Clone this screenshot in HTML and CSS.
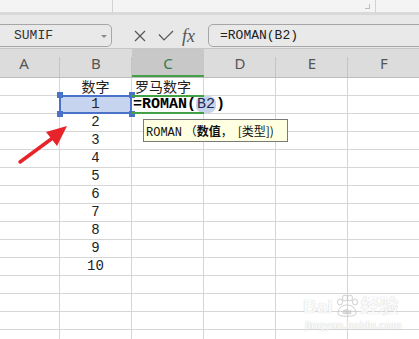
FILE: index.html
```html
<!DOCTYPE html>
<html lang="zh-CN">
<head>
  <meta charset="UTF-8">
  <meta name="viewport" content="width=device-width, initial-scale=1.0">
  <title>ROMAN 函数</title>
  <link rel="stylesheet" href="styles.css">
</head>
<body>
  <div class="app">
    <div class="ribbon">
      <div class="rb-seg rb-left"></div>
      <div class="rb-seg rb-mid"><span class="launcher"></span></div>
      <div class="rb-seg rb-right"></div>
    </div>

    <div class="fbar">
      <div class="namebox">
        <span class="name">SUMIF</span>
        <span class="drop"></span>
      </div>
      <div class="fbar-btns">
        <svg class="ico-x" width="14" height="12" viewBox="0 0 14 12">
          <path d="M2 1 L12 11 M12 1 L2 11" stroke="#555" stroke-width="1.2" fill="none"/>
        </svg>
        <svg class="ico-ok" width="16" height="11" viewBox="0 0 16 11">
          <path d="M1 4.5 L6 10 L15 1" stroke="#555" stroke-width="1.2" fill="none"/>
        </svg>
        <span class="fx">fx</span>
      </div>
      <div class="formula">=ROMAN(B2)</div>
    </div>

    <div class="sheet">
      <div class="heads">
        <div class="head">A</div>
        <div class="head">B</div>
        <div class="head active">C</div>
        <div class="head">D</div>
        <div class="head">E</div>
        <div class="head">F</div>
      </div>

      <div class="row">
        <div class="cell"></div>
        <div class="cell center">数字</div>
        <div class="cell">罗马数字</div>
        <div class="cell"></div><div class="cell"></div><div class="cell"></div>
      </div>
      <div class="row">
        <div class="cell"></div>
        <div class="cell num sel">1
          <span class="sel-frame"></span>
          <span class="handle tl"></span><span class="handle tr"></span>
          <span class="handle bl"></span><span class="handle br"></span>
        </div>
        <div class="cell edit">
          <span class="edit-frame"></span>=ROMAN(<span class="ref">B2</span>)
          <div class="tip"><span class="mono">ROMAN</span> （<b>数值</b>，<span class="gap"></span>[类型])</div>
        </div>
        <div class="cell"></div><div class="cell"></div><div class="cell"></div>
      </div>
      <div class="row"><div class="cell"></div><div class="cell num">2</div><div class="cell"></div><div class="cell"></div><div class="cell"></div><div class="cell"></div></div>
      <div class="row"><div class="cell"></div><div class="cell num">3</div><div class="cell"></div><div class="cell"></div><div class="cell"></div><div class="cell"></div></div>
      <div class="row"><div class="cell"></div><div class="cell num">4</div><div class="cell"></div><div class="cell"></div><div class="cell"></div><div class="cell"></div></div>
      <div class="row"><div class="cell"></div><div class="cell num">5</div><div class="cell"></div><div class="cell"></div><div class="cell"></div><div class="cell"></div></div>
      <div class="row"><div class="cell"></div><div class="cell num">6</div><div class="cell"></div><div class="cell"></div><div class="cell"></div><div class="cell"></div></div>
      <div class="row"><div class="cell"></div><div class="cell num">7</div><div class="cell"></div><div class="cell"></div><div class="cell"></div><div class="cell"></div></div>
      <div class="row"><div class="cell"></div><div class="cell num">8</div><div class="cell"></div><div class="cell"></div><div class="cell"></div><div class="cell"></div></div>
      <div class="row"><div class="cell"></div><div class="cell num">9</div><div class="cell"></div><div class="cell"></div><div class="cell"></div><div class="cell"></div></div>
      <div class="row"><div class="cell"></div><div class="cell num">10</div><div class="cell"></div><div class="cell"></div><div class="cell"></div><div class="cell"></div></div>
      <div class="row"><div class="cell"></div><div class="cell"></div><div class="cell"></div><div class="cell"></div><div class="cell"></div><div class="cell"></div></div>
      <div class="row"><div class="cell"></div><div class="cell"></div><div class="cell"></div><div class="cell"></div><div class="cell"></div><div class="cell"></div></div>
      <div class="row"><div class="cell"></div><div class="cell"></div><div class="cell"></div><div class="cell"></div><div class="cell"></div><div class="cell"></div></div>
      <div class="row"><div class="cell"></div><div class="cell"></div><div class="cell"></div><div class="cell"></div><div class="cell"></div><div class="cell"></div></div>
      <div class="row"><div class="cell"></div><div class="cell"></div><div class="cell"></div><div class="cell"></div><div class="cell"></div><div class="cell"></div></div>

      <!-- 红色箭头标注 -->
      <svg class="arrow" width="80" height="130" viewBox="0 0 80 130">
        <path d="M20 114 L54 89" stroke="#e8242a" stroke-width="3.5" stroke-linecap="round" fill="none"/>
        <path d="M67 78 L46 84 L57 98 Z" fill="#e8242a"/>
      </svg>

      <div class="watermark">
        <div class="wm-logo">
          <span>Bai</span>
          <svg width="26" height="24" viewBox="0 0 26 24">
            <g fill="none" stroke="#c8c8c8" stroke-width="1">
              <ellipse cx="6" cy="8" rx="2.5" ry="3"/>
              <ellipse cx="11" cy="4" rx="2.5" ry="3"/>
              <ellipse cx="16" cy="4" rx="2.5" ry="3"/>
              <ellipse cx="21" cy="8" rx="2.5" ry="3"/>
              <path d="M4 20 C4 13 9 11 13 11 C17 11 22 13 22 20 C22 23 4 23 4 20 Z"/>
            </g>
            <text x="13" y="20" font-size="7" text-anchor="middle" fill="#cccccc" font-family="Liberation Sans, sans-serif">du</text>
          </svg>
          <span>经验</span>
        </div>
        <div class="wm-url">jingyan.baidu.com</div>
      </div>
    </div>
  </div>
</body>
</html>
```

FILE: styles.css
```css
:root {
  --grid-line: #d6d6d6;
  --head-bg: #dcdcdc;
  --bar-bg: #e8e8e8;
  --select-blue: #4a72c8;
  --edit-green: #43a047;
  --cell-font: "Noto Sans CJK SC", sans-serif;
  --mono: "Liberation Mono", "Noto Sans CJK SC", monospace;
}

* {
  margin: 0;
  padding: 0;
  box-sizing: border-box;
}

body {
  width: 419px;
  height: 339px;
  overflow: hidden;
  background: #ffffff;
  font-family: var(--cell-font);
  color: #222;
}

.app {
  width: 419px;
  height: 339px;
  overflow: hidden;
}

/* 顶部功能区残留 */
.ribbon {
  display: flex;
  height: 15px;
  background: #f4f4f4;
  border-bottom: 3px solid #d9d9d9;
}

.rb-seg {
  height: 12px;
}

.rb-left {
  width: 113px;
  border-right: 1px solid #d2d2d2;
}

.rb-mid {
  width: 263px;
  border-right: 1px solid #d2d2d2;
  display: flex;
  justify-content: flex-end;
  padding: 4px 5px 0 0;
}

.launcher {
  width: 5px;
  height: 5px;
  border-right: 1px solid #bdbdbd;
  border-bottom: 1px solid #bdbdbd;
}

.rb-right {
  flex: 1;
}

/* 编辑栏 */
.fbar {
  display: flex;
  align-items: flex-end;
  height: 33px;
  padding-bottom: 1px;
  background: var(--bar-bg);
}

.namebox {
  display: flex;
  align-items: center;
  justify-content: space-between;
  width: 118px;
  height: 23px;
  margin-left: -6px;
  padding: 0 4px 0 19px;
  border: 1px solid #a6a6a6;
  border-radius: 5px;
  background: #e9e9e9;
}

.name {
  font-family: var(--mono);
  font-size: 13px;
  color: #333;
}

.drop {
  width: 0;
  height: 0;
  margin-top: 2px;
  border-left: 3px solid transparent;
  border-right: 3px solid transparent;
  border-top: 3px solid #8a8a8a;
}

.fbar-btns {
  display: flex;
  align-items: center;
  width: 96px;
  height: 23px;
  padding-left: 21px;
}

.ico-ok {
  margin-left: 11px;
}

.fx {
  margin-left: 8px;
  font-family: "Liberation Serif", serif;
  font-style: italic;
  font-size: 18px;
  line-height: 20px;
  color: #555;
}

.formula {
  flex: 1;
  height: 23px;
  margin-right: -10px;
  padding-left: 11px;
  border: 1px solid #a6a6a6;
  border-radius: 5px;
  background: #e9e9e9;
  font-family: var(--mono);
  font-size: 13px;
  line-height: 21px;
  color: #222;
}

/* 表格 */
.sheet {
  position: relative;
  height: 291px;
  overflow: hidden;
}

.heads,
.row {
  display: grid;
  grid-template-columns: repeat(6, 72px);
  margin-left: -12px;
}

.heads {
  height: 30px;
  background: var(--head-bg);
  border-top: 1px solid #c6c6c6;
  border-bottom: 1px solid #bdbdbd;
}

.head {
  text-align: center;
  font-family: "Noto Sans", sans-serif;
  font-size: 15px;
  line-height: 28px;
  color: #555;
  background: linear-gradient(#c4c4c4, #c4c4c4) right bottom / 1px 20px no-repeat;
}

.head.active {
  background: #c8c8c8;
  box-shadow: inset 0 -2px 0 var(--edit-green);
  color: #2f7d4a;
}

.row {
  height: 18px;
}

.cell {
  border-right: 1px solid var(--grid-line);
  border-bottom: 1px solid var(--grid-line);
  font-size: 14px;
  line-height: 17px;
  white-space: nowrap;
  padding-left: 3px;
}

.center {
  text-align: center;
  padding-left: 0;
}

.num {
  text-align: center;
  padding-left: 0;
  font-family: var(--mono);
  font-size: 14px;
}

/* 选中的 B2 */
.sel {
  position: relative;
  background: #c6d4f0;
}

.sel-frame {
  position: absolute;
  left: -1px;
  top: -1px;
  right: -1px;
  bottom: -1px;
  border: 2px solid var(--select-blue);
}

.handle {
  position: absolute;
  width: 6px;
  height: 6px;
  background: var(--select-blue);
}

.handle.tl { left: -3px; top: -4px; }
.handle.tr { right: -4px; top: -4px; }
.handle.bl { left: -3px; bottom: -4px; }
.handle.br { right: -4px; bottom: -4px; }

/* 正在编辑的 C2 */
.edit {
  position: relative;
  border-right-color: transparent;
  padding-left: 1px;
  font-family: var(--mono);
  font-weight: bold;
  font-size: 15px;
  color: #000;
}

.edit-frame {
  position: absolute;
  left: 0;
  right: -1px;
  top: -1px;
  bottom: -1px;
  border-top: 2px solid var(--edit-green);
  border-bottom: 2px solid var(--edit-green);
}

.ref {
  font-weight: normal;
  background: #c6d3ea;
  border-radius: 7px;
  padding: 0 1px;
  color: #1f2a55;
}

.tip {
  position: absolute;
  left: 11px;
  top: 23px;
  width: 145px;
  height: 23px;
  padding: 0 0 0 2px;
  border: 1px solid #7a7a7a;
  background: #ffffe1;
  font-family: var(--cell-font);
  font-weight: normal;
  font-size: 12px;
  line-height: 21px;
  color: #111;
}

.tip .mono {
  font-family: var(--mono);
  font-size: 12px;
}

.tip b {
  font-weight: bold;
}

.tip .gap {
  display: inline-block;
  width: 5px;
}

.arrow {
  position: absolute;
  left: 0;
  top: 0;
}

/* 水印 */
.watermark {
  position: absolute;
  left: 303px;
  top: 246px;
  color: #fafafa;
  text-shadow: 0 0 1px #b8b8b8;
  opacity: 0.85;
}

.wm-logo {
  display: flex;
  align-items: flex-end;
  gap: 1px;
  font-family: "Liberation Sans", "Noto Sans CJK SC", sans-serif;
  font-size: 19px;
  font-weight: bold;
  line-height: 22px;
}

.wm-url {
  font-family: "Liberation Sans", sans-serif;
  font-size: 11px;
  font-weight: bold;
  line-height: 14px;
  padding-left: 2px;
}
```
